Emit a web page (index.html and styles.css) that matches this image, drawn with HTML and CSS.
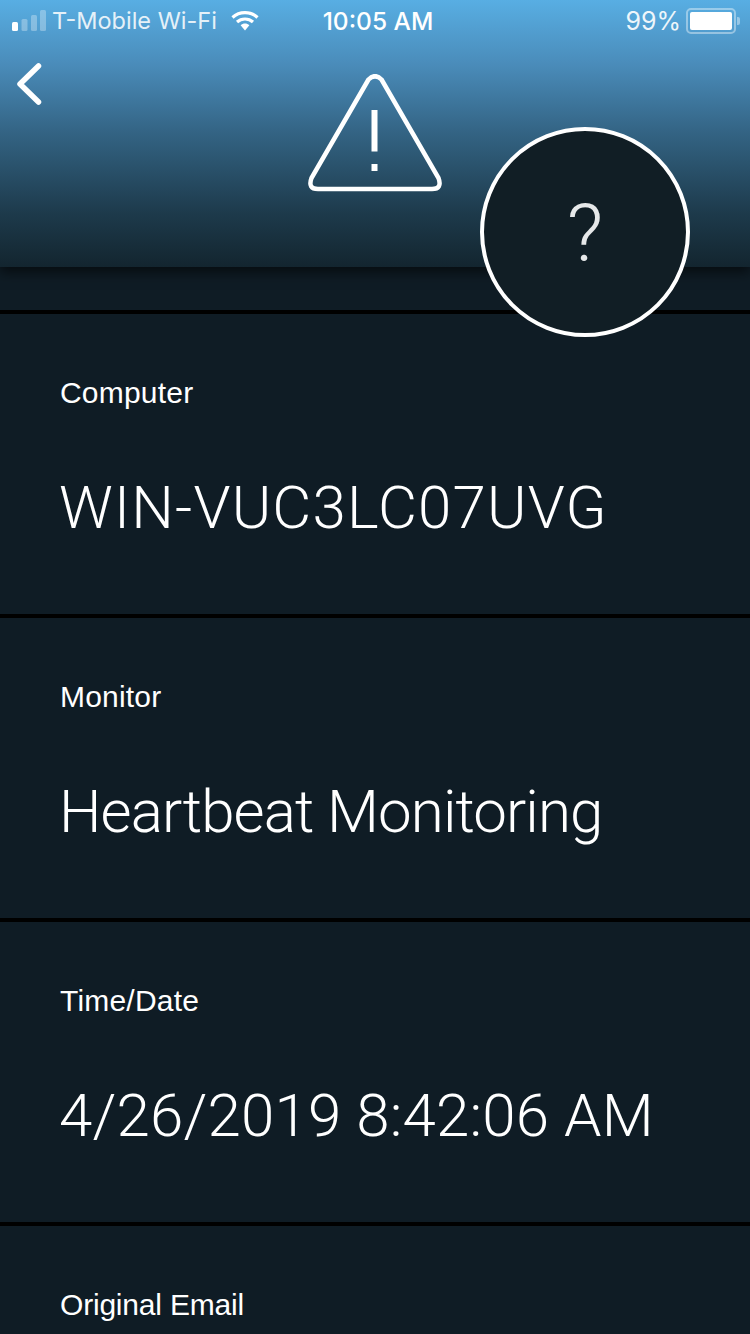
FILE: index.html
```html
<!DOCTYPE html>
<html lang="en">
<head>
  <meta charset="UTF-8" />
  <title>Alert detail</title>
  <link rel="stylesheet" href="styles.css">
</head>
<body>
  <div class="screen">
    <header class="top">
      <div class="status">
        <div class="status-left">
          <svg class="signal" width="34" height="21" viewBox="0 0 34 21">
            <rect x="0" y="12" width="6" height="9" rx="1.500" fill="#fff"/>
            <rect x="9.500" y="9" width="6" height="12" rx="1.500" fill="#fff" opacity=".3"/>
            <rect x="19" y="5" width="6" height="16" rx="1.500" fill="#fff" opacity=".3"/>
            <rect x="28" y="0" width="6" height="21" rx="1.500" fill="#fff" opacity=".3"/>
          </svg>
          <span class="carrier">T-Mobile Wi-Fi</span>
          <svg class="wifi" width="28" height="21" viewBox="0 0 28 21">
            <path d="M1.500 7.500C8.500 1 19.500 1 26.500 7.500M6 12C10.500 8 17.500 8 22 12" fill="none" stroke="#fff" stroke-width="3.200"/>
            <path d="M9.600 15.200C12.200 13 15.800 13 18.400 15.200L14 20.400Z" fill="#fff"/>
          </svg>
        </div>
        <span class="clock">10:05 AM</span>
        <div class="status-right">
          <span class="pct">99%</span>
          <span class="battery"><span class="battery-fill"></span></span>
          <span class="battery-tip"></span>
        </div>
      </div>
      <svg class="back" width="28" height="46" viewBox="0 0 28 46">
        <path d="M23.500 5L5 23L23.500 41" fill="none" stroke="#fff" stroke-width="5.500" stroke-linecap="round" stroke-linejoin="round"/>
      </svg>
      <svg class="warn" width="134" height="118" viewBox="0 0 134 118">
        <path d="M60.500 5.500Q67 -1 73.500 5.500L130.500 104Q134.500 115 124 115L10 115Q-.5 115 3.500 104Z" fill="none" stroke="#fff" stroke-width="4.500"/>
        <rect x="63.500" y="36" width="6" height="41.500" fill="#fff"/>
        <rect x="63.500" y="90" width="6" height="7" fill="#fff"/>
      </svg>
    </header>

    <div class="help"><span>?</span></div>

    <main class="rows">
      <section class="row">
        <div class="label">Computer</div>
        <div class="value value-wide">WIN-VUC3LC07UVG</div>
      </section>
      <section class="row">
        <div class="label">Monitor</div>
        <div class="value value-tight">Heartbeat Monitoring</div>
      </section>
      <section class="row">
        <div class="label">Time/Date</div>
        <div class="value value-date">4/26/2019 8:42:06 AM</div>
      </section>
      <section class="row">
        <div class="label label-tight">Original Email</div>
      </section>
    </main>
  </div>
</body>
</html>
```

FILE: styles.css
```css
html, body { margin: 0; padding: 0; background: #0f1c25; }
body { font-family: "Liberation Sans", Arial, sans-serif; color: #fff; }
.screen { position: relative; width: 750px; height: 1334px; overflow: hidden; }

.top {
  height: 267px;
  background: linear-gradient(180deg, #58aee3 0%, #4a8cba 24%, #336383 50%, #1d3a4b 80%, #13252f 100%);
  box-shadow: 0 5px 12px rgba(0, 0, 0, .6);
  position: relative;
}
.status {
  height: 40px;
  display: grid;
  grid-template-columns: 1fr auto 1fr;
  align-items: center;
  font-family: Inter, sans-serif;
  font-size: 23.500px;
  padding: 1px 6px 0 12px;
  box-sizing: border-box;
}
.status-left { display: flex; align-items: center; }
.signal { margin-right: 6px; }
.carrier { opacity: .85; }
.wifi { margin-left: 14px; }
.clock { font-weight: 500; font-size: 24.500px; }
.status-right { display: flex; align-items: center; justify-content: flex-end; padding-right: 4px; }
.pct { opacity: .9; margin-right: 5px; font-size: 25px; }
.battery {
  width: 42px;
  height: 18px;
  padding: 2px;
  border: 2px solid rgba(255, 255, 255, .4);
  border-radius: 5px;
  display: block;
}
.battery-fill { display: block; height: 100%; background: #fff; border-radius: 2px; }
.battery-tip {
  width: 3px;
  height: 8px;
  margin-left: 1px;
  background: rgba(255, 255, 255, .4);
  border-radius: 0 2px 2px 0;
}
.back { position: absolute; left: 15px; top: 61px; }
.warn { position: absolute; left: 308px; top: 74px; }

.help {
  position: absolute;
  left: 480px;
  top: 127px;
  width: 210px;
  height: 210px;
  box-sizing: border-box;
  border: 4px solid #fff;
  border-radius: 50%;
  background: #111e25;
  padding-top: 4px;
  display: flex;
  align-items: center;
  justify-content: center;
  font-family: Roboto, sans-serif;
  font-weight: 300;
  font-size: 80px;
  color: #e6e8e9;
}

.rows { padding-top: 43px; }
.row {
  height: 300px;
  border-top: 4px solid #000;
}
.label { padding: 62px 0 0 60px; font-size: 30px; line-height: 34px; letter-spacing: .2px; }
.label-tight { letter-spacing: -.2px; }
.value {
  padding: 64px 0 0 59px;
  font-family: Roboto, sans-serif;
  font-weight: 300;
  font-size: 60px;
  line-height: 68px;
}
.value-wide { letter-spacing: 1.200px; }
.value-tight { letter-spacing: -.9px; }
.value-date { letter-spacing: .2px; }
```
